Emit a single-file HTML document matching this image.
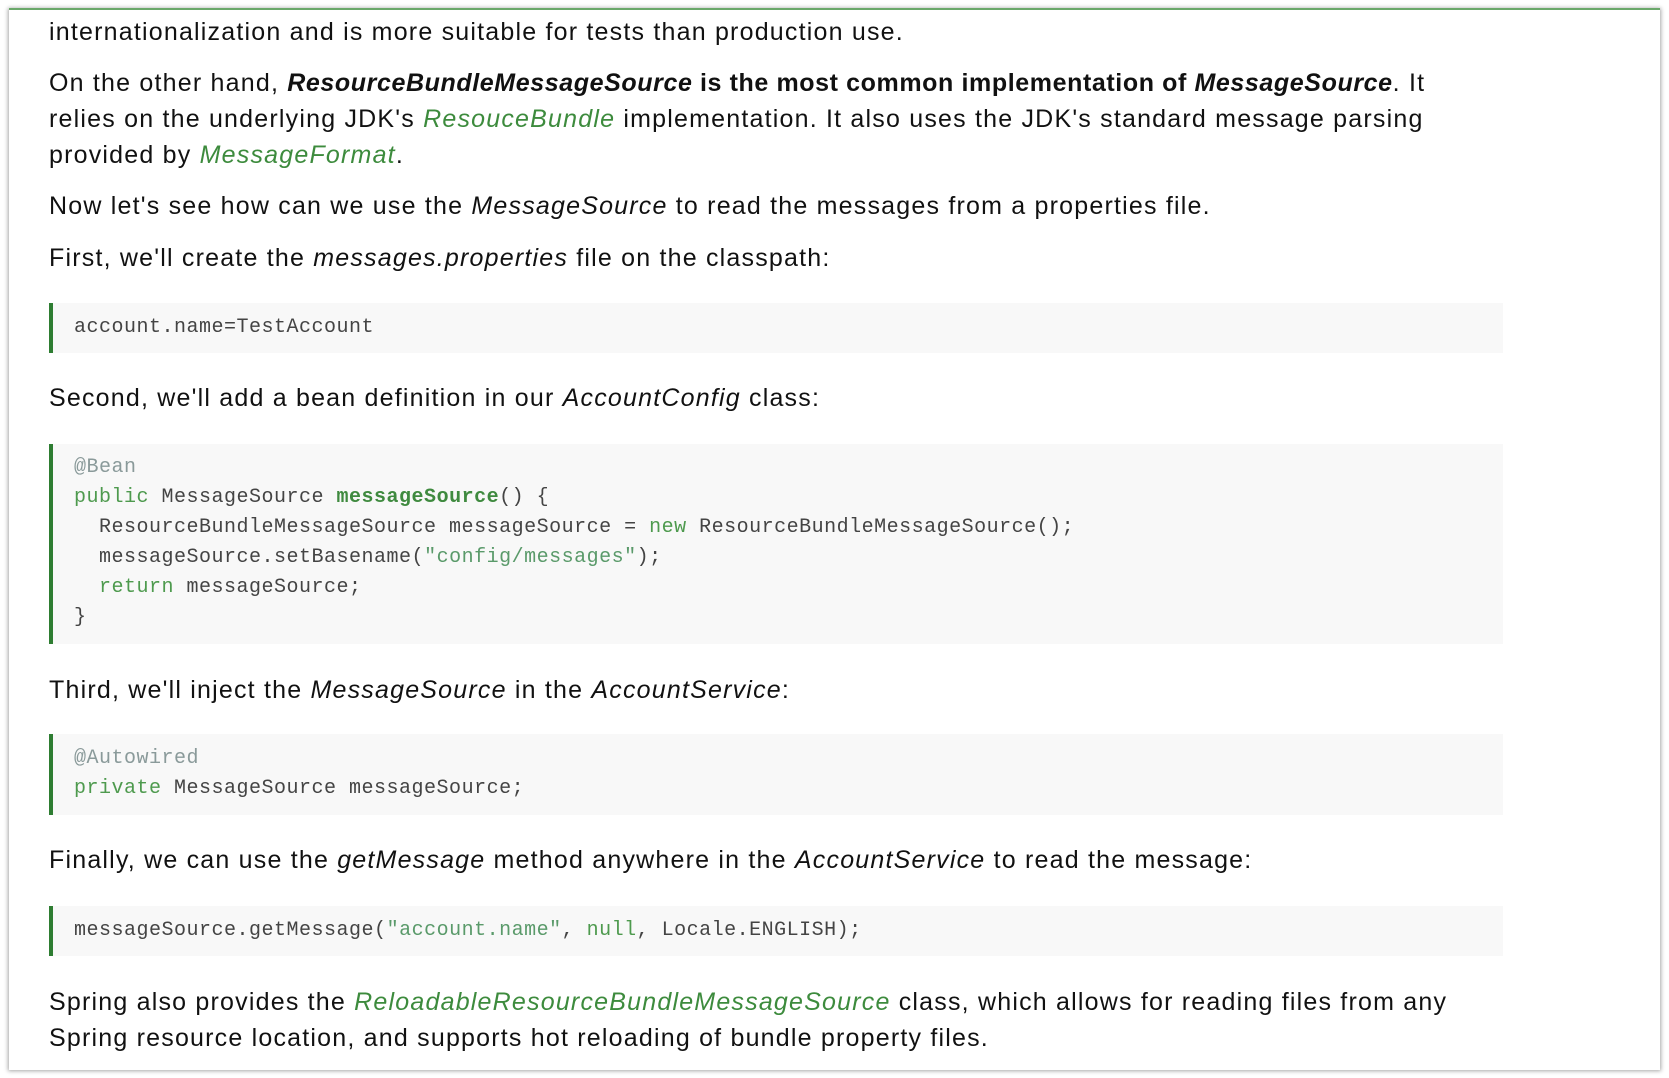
<!DOCTYPE html>
<html><head><meta charset="utf-8"><style>
html,body{margin:0;padding:0;background:#fff;width:1669px;height:1078px;overflow:hidden}
body{position:relative;font-family:"Liberation Sans",sans-serif;color:#111}
.card{position:absolute;left:9px;top:9px;width:1651px;height:1061px;background:#fff;box-shadow:0 0 4px 1px rgba(0,0,0,.35)}
.topline{position:absolute;left:9px;top:8px;width:1651px;height:2px;background:#6aa86a}
.t{position:absolute;left:49px;font-size:25px;letter-spacing:1.2px;line-height:36px;white-space:nowrap;color:#111}
.t i{font-style:italic}
.t b{letter-spacing:0.6px}
.g{color:#3d8b3d;font-style:italic}
.code{position:absolute;left:49px;width:1454px;background:#f8f8f8;border-left:4px solid #2e7d32;box-sizing:border-box}
.cl{position:absolute;left:21px;font-family:"Liberation Mono",monospace;font-size:20px;letter-spacing:.5px;color:#444;white-space:pre;line-height:30px}
.k{color:#4e9a4e}
.kb{color:#3f8a3f;font-weight:bold}
.s{color:#5a9a6a}
.a{color:#8a9a9a}
</style></head><body>
<div class="card"></div>
<div class="topline"></div>
<div class="t" style="top:14px">internationalization and is more suitable for tests than production use.</div>
<div class="t" style="top:65px">On the other hand, <b><i>ResourceBundleMessageSource</i> is the most common implementation of <i>MessageSource</i></b>. It</div>
<div class="t" style="top:101px">relies on the underlying JDK's <span class="g">ResouceBundle</span> implementation. It also uses the JDK's standard message parsing</div>
<div class="t" style="top:137px">provided by <span class="g">MessageFormat</span>.</div>
<div class="t" style="top:188px">Now let's see how can we use the <i>MessageSource</i> to read the messages from a properties file.</div>
<div class="t" style="top:240px">First, we'll create the <i>messages.properties</i> file on the classpath:</div>
<div class="code" style="top:303px;height:50px"><div class="cl" style="top:10px">account.name=TestAccount</div></div>
<div class="t" style="top:380px">Second, we'll add a bean definition in our <i>AccountConfig</i> class:</div>
<div class="code" style="top:444px;height:200px">
<div class="cl" style="top:9px"><span class="a">@Bean</span>
<span class="k">public</span> MessageSource <span class="kb">messageSource</span>() {
  ResourceBundleMessageSource messageSource = <span class="k">new</span> ResourceBundleMessageSource();
  messageSource.setBasename(<span class="s">"config/messages"</span>);
  <span class="k">return</span> messageSource;
}</div></div>
<div class="t" style="top:672px">Third, we'll inject the <i>MessageSource</i> in the <i>AccountService</i>:</div>
<div class="code" style="top:734px;height:81px"><div class="cl" style="top:10px"><span class="a">@Autowired</span>
<span class="k">private</span> MessageSource messageSource;</div></div>
<div class="t" style="top:842px">Finally, we can use the <i>getMessage</i> method anywhere in the <i>AccountService</i> to read the message:</div>
<div class="code" style="top:906px;height:50px"><div class="cl" style="top:10px">messageSource.getMessage(<span class="s">"account.name"</span>, <span class="k">null</span>, Locale.ENGLISH);</div></div>
<div class="t" style="top:984px">Spring also provides the <span class="g">ReloadableResourceBundleMessageSource</span> class, which allows for reading files from any</div>
<div class="t" style="top:1020px">Spring resource location, and supports hot reloading of bundle property files.</div>
</body></html>
